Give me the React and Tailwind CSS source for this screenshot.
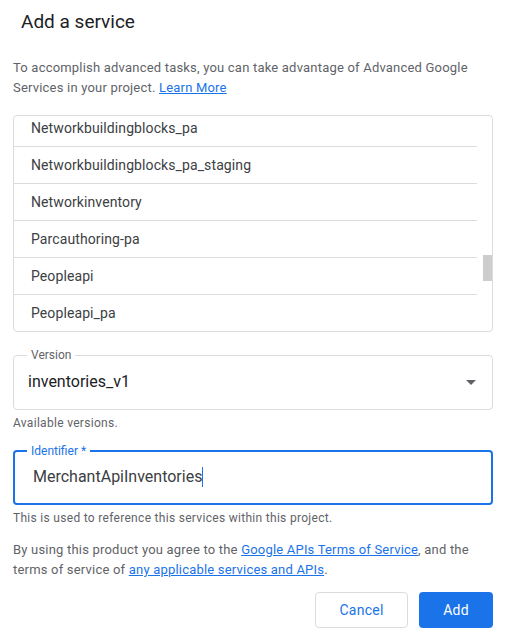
const services = [
  'Networkbuildingblocks_pa',
  'Networkbuildingblocks_pa_staging',
  'Networkinventory',
  'Parcauthoring-pa',
  'Peopleapi',
  'Peopleapi_pa',
];

export default function App() {
  return (
    <div className="w-[507px] h-[634px] bg-white overflow-hidden font-['Roboto',sans-serif] text-[#3c4043]">
      {/* Title */}
      <h2 className="pl-[21px] pt-[10px] h-[58px] text-[19px] leading-[24px] text-[#202124]">Add a service</h2>

      <div className="pl-[13px] pr-[14px]">
        <p className="text-[13px] leading-[20px] tracking-[0.2px] text-[#5f6368]">
          To accomplish advanced tasks, you can take advantage of Advanced Google Services in your project.{' '}
          <a href="#" className="text-[#1a73e8] underline">Learn More</a>
        </p>

        {/* Service list */}
        <div className="mt-[17px] h-[217px] border border-[#dadce0] rounded-[4px] flex overflow-hidden">
          <div className="flex-1 overflow-hidden">
            <ul className="-mt-[6px]">
              {services.map((s, i) => (
                <li
                  key={s}
                  className={`h-[37px] flex items-center pl-[17px] text-[14px] tracking-[0.1px] ${i < services.length - 1 ? 'border-b border-[#dadce0]' : ''}`}
                >
                  {s}
                </li>
              ))}
            </ul>
          </div>
          <div className="w-[15px] flex justify-end">
            <div className="w-[9px] h-[26px] mt-[139px] bg-[#cdcdcd]" />
          </div>
        </div>

        {/* Version select */}
        <fieldset className="mt-[16px] h-[62px] border border-[#dadce0] rounded-[4px] px-[13px] flex items-center">
          <legend className="px-[4px] text-[12px] leading-[14px] text-[#5f6368]">Version</legend>
          <div className="flex-1 flex items-center justify-between -mt-[7px] pl-[1px] pr-[1px]">
            <span className="text-[16px] text-[#202124]">inventories_v1</span>
            <svg width="10" height="5" viewBox="0 0 10 5" className="mr-[2px]">
              <path d="M0 0 L10 0 L5 5 Z" fill="#5f6368" />
            </svg>
          </div>
        </fieldset>
        <p className="mt-[5px] text-[12px] leading-[16px] tracking-[0.3px] text-[#5f6368]">Available versions.</p>

        {/* Identifier input (focused) */}
        <fieldset className="mt-[13px] h-[61px] border-2 border-[#1a73e8] rounded-[4px] px-[12px] flex items-center">
          <legend className="px-[4px] text-[12px] leading-[14px] text-[#1a73e8]">Identifier *</legend>
          <div className="flex-1 flex items-center -mt-[7px] pl-[6px] text-[16px] text-[#3c4043]">
            <span>MerchantApiInventories</span>
            <span className="w-[1px] h-[20px] bg-[#1a73e8]" />
          </div>
        </fieldset>
        <p className="mt-[5px] text-[12px] leading-[16px] tracking-[0.3px] text-[#5f6368]">This is used to reference this services within this project.</p>

        <p className="mt-[14px] text-[13px] leading-[20px] tracking-[0.2px] text-[#5f6368]">
          By using this product you agree to the{' '}
          <a href="#" className="text-[#1a73e8] underline">Google APIs Terms of Service</a>, and the terms of service of{' '}
          <a href="#" className="text-[#1a73e8] underline">any applicable services and APIs</a>.
        </p>

        {/* Actions */}
        <div className="mt-[12px] flex justify-end gap-[11px]">
          <button className="w-[93px] h-[36px] rounded-[4px] border border-[#dadce0] text-[14px] tracking-[0.25px] text-[#1a73e8] bg-white">
            Cancel
          </button>
          <button className="w-[74px] h-[36px] rounded-[4px] bg-[#1a73e8] text-[14px] tracking-[0.25px] text-white">
            Add
          </button>
        </div>
      </div>
    </div>
  );
}
